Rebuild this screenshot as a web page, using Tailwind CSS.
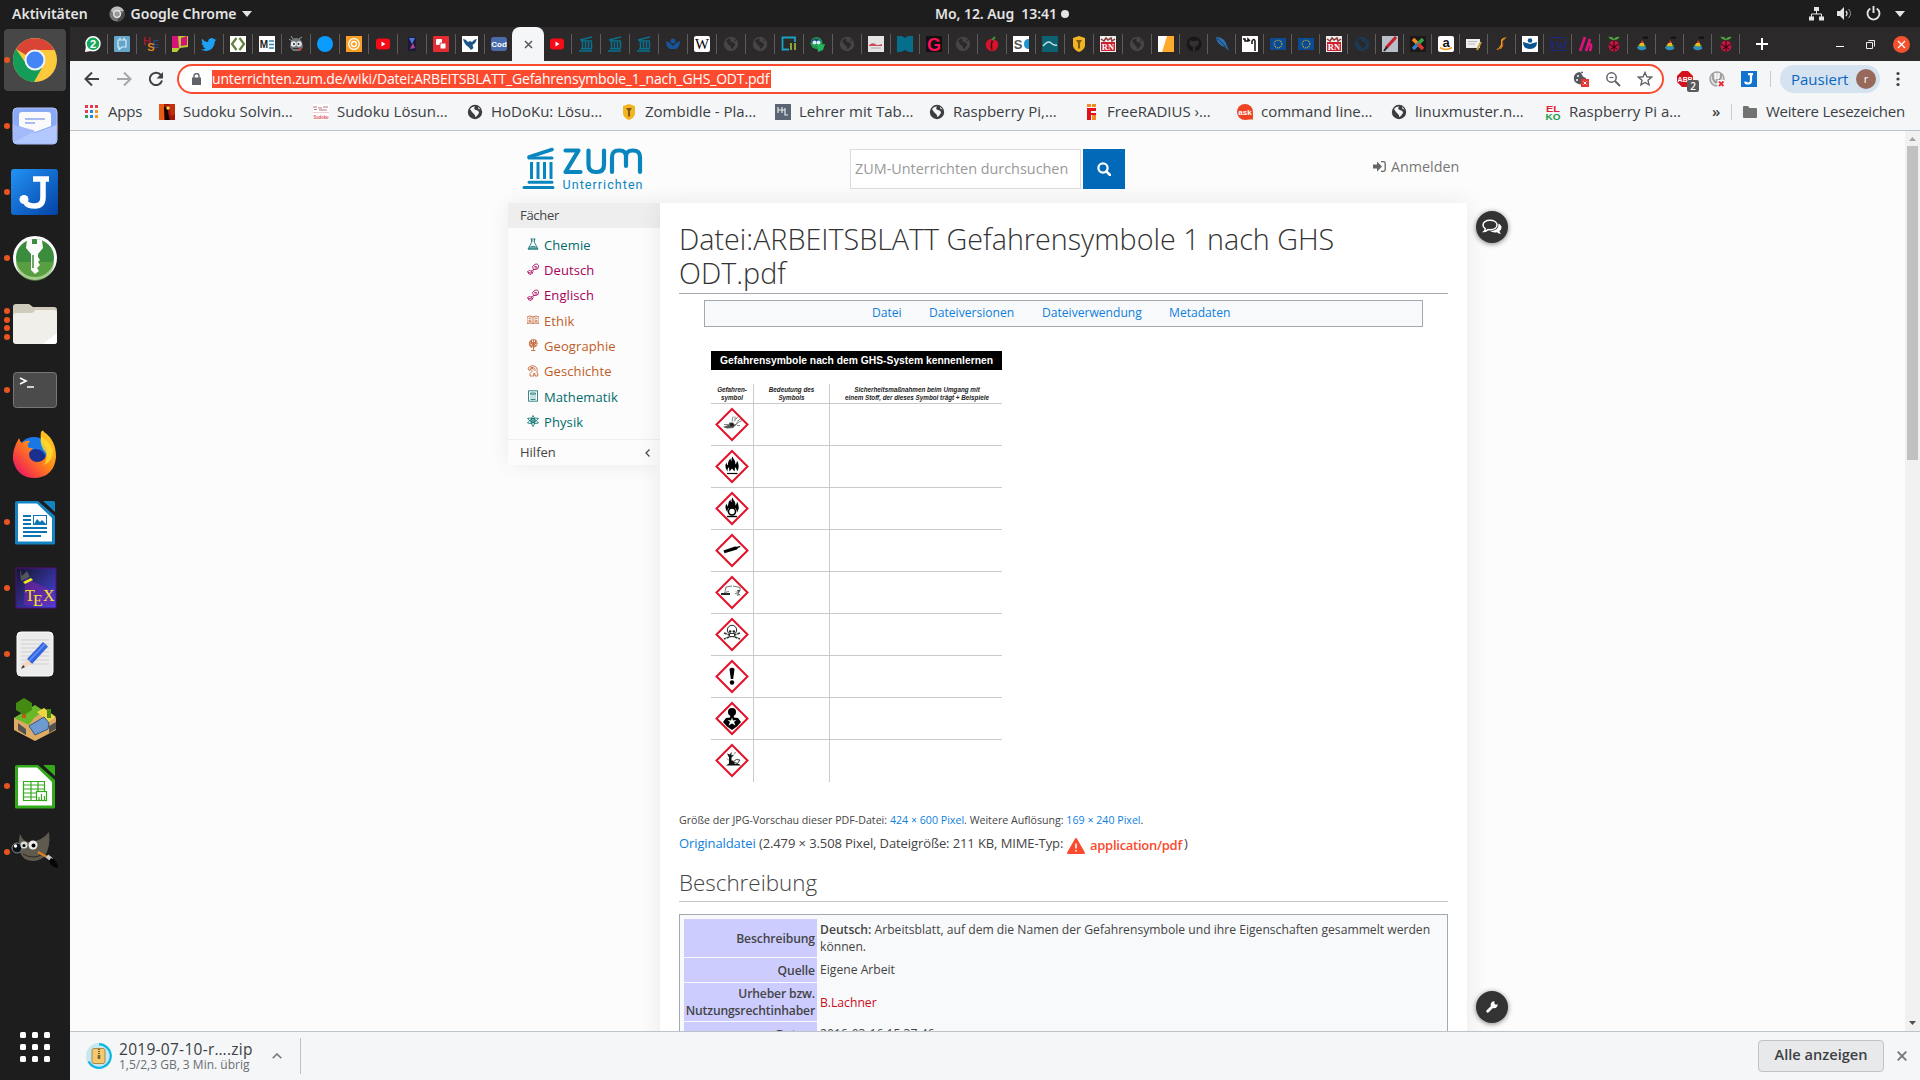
<!DOCTYPE html>
<html lang="de">
<head>
<meta charset="utf-8">
<title>Datei:ARBEITSBLATT Gefahrensymbole 1 nach GHS ODT.pdf</title>
<script src="https://cdn.jsdelivr.net/npm/@tailwindcss/browser@4"></script>
</head>
<body class="w-[1920px] h-[1080px] overflow-hidden bg-[#1d1d1d] font-['Open_Sans','Noto_Sans',sans-serif]">
<div class="flex flex-col h-full">

<!-- GNOME top bar -->
<header class="flex h-[27px] shrink-0 items-center bg-[#1d1d1d] text-[#e4e4e4] text-[14px] font-semibold font-['Noto_Sans',sans-serif]">
  <div class="flex w-[935px] items-center pl-3">
    <span>Aktivitäten</span>
    <svg class="ml-[21px] size-4" viewBox="0 0 16 16"><circle cx="8" cy="8" r="7.6" fill="#777"/><path d="M8 .4A7.6 7.6 0 0 1 15 5H8A3.4 3.4 0 0 0 4.6 8L2 4A7.600 7.600 0 0 1 8 .4z" fill="#bdbdbd"/><path d="M15 5a7.600 7.600 0 0 1-7 10.600l3.400-6.600z" fill="#4a4a4a"/><circle cx="8" cy="8" r="3.400" fill="#999" stroke="#eee" stroke-width="1.200"/></svg>
    <span class="ml-[6px]">Google Chrome</span>
    <svg class="ml-[5px] w-[10px] h-[6px]" viewBox="0 0 10 6"><path d="M0 0h10L5 6z" fill="#e4e4e4"/></svg>
  </div>
  <span class="whitespace-pre tracking-[-0.06px]">Mo, 12. Aug  13:41</span>
  <span class="ml-[4px] size-[8px] rounded-full bg-[#e4e4e4]"></span>
  <div class="ml-auto flex items-center pr-[15px]">
    <svg class="w-[15px] h-[14px]" viewBox="0 0 15 14"><path d="M5 0h5v4H5zM0 9.500h5v4H0zM10 9.500h5v4h-5z" fill="#e4e4e4"/><path d="M7.500 4v3M2.500 10V7h10v3" fill="none" stroke="#e4e4e4"/></svg>
    <svg class="ml-[13px] w-[15px] h-[13px]" viewBox="0 0 15 13"><path d="M0 4h3l4-4v13L3 9H0z" fill="#e4e4e4"/><path d="M9 4q2 2.500 0 5" fill="none" stroke="#e4e4e4" stroke-width="1.300"/><path d="M11.500 2q4 4.500 0 9" fill="none" stroke="#999"/></svg>
    <svg class="ml-[14px] size-[15px]" viewBox="0 0 15 15"><path d="M4.300 2.500a6 6 0 1 0 6.400 0M7.500 0v7" fill="none" stroke="#e4e4e4" stroke-width="1.900"/></svg>
    <svg class="ml-[14px] w-[10px] h-[6px]" viewBox="0 0 10 6"><path d="M0 0h10L5 6z" fill="#e4e4e4"/></svg>
  </div>
</header>

<div class="flex flex-1 min-h-0">
<!-- Dock -->
<nav class="flex w-[70px] shrink-0 flex-col bg-[#1d1d1d]">
  <div id="dock" class="flex flex-col"></div>
  <div class="mt-auto mb-[18px] ml-[20px] grid w-[30px] grid-cols-3 gap-[6px]">
    <i class="size-[6px] rounded-[1.5px] bg-white"></i><i class="size-[6px] rounded-[1.5px] bg-white"></i><i class="size-[6px] rounded-[1.5px] bg-white"></i>
    <i class="size-[6px] rounded-[1.5px] bg-white"></i><i class="size-[6px] rounded-[1.5px] bg-white"></i><i class="size-[6px] rounded-[1.5px] bg-white"></i>
    <i class="size-[6px] rounded-[1.5px] bg-white"></i><i class="size-[6px] rounded-[1.5px] bg-white"></i><i class="size-[6px] rounded-[1.5px] bg-white"></i>
  </div>
</nav>

<main class="flex min-w-0 flex-1 flex-col">
  <!-- Tab strip -->
  <div class="flex h-[34px] shrink-0 items-center bg-[#2c292b] pl-[9px]">
    <div id="tabs" class="flex h-full items-center"></div>
    <svg class="ml-[16px] size-3" viewBox="0 0 12 12"><path d="M6 0v12M0 6h12" stroke="#fff" stroke-width="2"/></svg>
    <div class="ml-auto flex items-center pr-[10px]">
      <span class="mt-[5px] h-px w-[8px] bg-white"></span>
      <svg class="ml-[22px] size-[9px]" viewBox="0 0 9 9"><path d="M.5 2.500h6v6h-6zM2.500.5h6v6" fill="none" stroke="#eee"/></svg>
      <svg class="ml-[18px] size-[17px]" viewBox="0 0 17 17"><circle cx="8.500" cy="8.500" r="8.500" fill="#f4512f"/><path d="M5 5l7 7M12 5l-7 7" stroke="#fff" stroke-width="1.300"/></svg>
    </div>
  </div>

  <!-- Navigation bar -->
  <div class="flex h-[36px] shrink-0 items-center bg-[#f4f6f8] text-[15px] text-[#3c4043]">
    <svg class="ml-[14px] size-4" viewBox="0 0 16 16"><path d="M15 8H2M8 1.500L1.500 8L8 14.500" fill="none" stroke="#3f4245" stroke-width="2"/></svg>
    <svg class="ml-[16px] size-4" viewBox="0 0 16 16"><path d="M1 8h13M8 1.500L14.500 8L8 14.500" fill="none" stroke="#a5a8ab" stroke-width="2"/></svg>
    <svg class="ml-[16px] size-4" viewBox="0 0 16 16"><path d="M13 4.200A6.200 6.200 0 1 0 14 9.500" fill="none" stroke="#3f4245" stroke-width="2"/><path d="M15 1v6.500H8.500z" fill="#3f4245"/></svg>
    <div class="ml-[13px] flex h-[30px] w-[1487px] items-center rounded-full border-2 border-[#fb4a2e] bg-white">
      <svg class="ml-[13px] w-[9px] h-[12px]" viewBox="0 0 9 12"><path d="M0 4.500h9V12H0z" fill="#5f6368"/><path d="M2 5V3a2.500 2.500 0 0 1 5 0v2" fill="none" stroke="#5f6368" stroke-width="1.400"/></svg>
      <span class="ml-[11px] flex h-[18px] w-[559px] items-center whitespace-nowrap bg-[#fb4a2e] text-[14px] leading-[18px] tracking-[-0.17px] text-white">unterrichten.zum.de/wiki/Datei:ARBEITSBLATT_Gefahrensymbole_1_nach_GHS_ODT.pdf</span>
      <div class="ml-auto flex items-center gap-[16px] pr-[9px]">
        <svg class="size-4" viewBox="0 0 16 16"><path d="M7 1a6.200 6.200 0 1 0 6.200 6.200L10 5.500 8.500 3z" fill="#55595d"/><circle cx="5" cy="5" r="1" fill="#fff"/><circle cx="4" cy="9" r="1" fill="#fff"/><circle cx="9" cy="1.500" r="1" fill="#55595d"/><rect x="8" y="8" width="8" height="8" fill="#e53935"/><path d="M10.500 10.500l3 3m0-3l-3 3" stroke="#fff"/></svg>
        <svg class="size-4" viewBox="0 0 16 16"><circle cx="6.500" cy="6.500" r="4.700" fill="none" stroke="#5f6368" stroke-width="1.500"/><path d="M10 10l5 5" stroke="#5f6368" stroke-width="2"/><path d="M4.500 6.500h4" stroke="#5f6368"/></svg>
        <svg class="size-4" viewBox="0 0 16 16"><path d="M8 1.500l1.900 4.300 4.700.4-3.600 3.100 1.100 4.600L8 11.500l-4.100 2.400L5 9.300 1.400 6.200l4.700-.4z" fill="none" stroke="#5f6368" stroke-width="1.400"/></svg>
      </div>
    </div>
    <div class="relative ml-[13px] size-4">
      <svg class="size-4" viewBox="0 0 16 16"><path d="M5 0h6l5 5v6l-5 5H5l-5-5V5z" fill="#d4121c"/><text x="8" y="10.500" font-size="7" font-weight="700" text-anchor="middle" fill="#fff" font-family="Liberation Sans">ABP</text></svg>
      <span class="absolute left-[10px] top-[9px] flex h-[12px] w-[12px] items-center justify-center rounded-[2px] bg-[#5b5b5b] text-[10px] font-semibold text-white">2</span>
    </div>
    <svg class="ml-[16px] size-4" viewBox="0 0 16 16"><circle cx="8" cy="8" r="7" fill="#ddd" stroke="#a2a2a2" stroke-width="1.500"/><path d="M4 3v5l3 4M12 3v4l-3 3M8 8v4" fill="none" stroke="#909090" stroke-width="1.500"/><path d="M6 2l1 6M10 2L9 8" stroke="#fff" stroke-width="1.200"/><rect x="8.500" y="9" width="7" height="7" fill="#fff"/><path d="M10 10.500l4.500 4.500m0-4.500L10 15" stroke="#e2343c" stroke-width="2"/></svg>
    <svg class="ml-[16px] size-4" viewBox="0 0 16 16"><rect width="16" height="16" fill="#1173cf"/><path d="M7 3.200h5M10 3v6.500q0 3-2.800 3t-3-1.900" fill="none" stroke="#fff" stroke-width="2.200"/></svg>
    <span class="ml-[13px] h-4 w-px bg-[#c9ccd0]"></span>
    <div class="ml-[9px] flex h-[28px] w-[100px] items-center rounded-full bg-[#d5e3f0] pl-[11px] text-[#0b66c0]"><span class="w-[57px]">Pausiert</span><span class="ml-[8px] flex size-5 items-center justify-center rounded-full bg-[#96695c] text-[11px] text-white">r</span></div>
    <svg class="ml-[16px] w-1 h-4" viewBox="0 0 4 16"><g fill="#3f4245"><circle cx="2" cy="2.500" r="1.600"/><circle cx="2" cy="8" r="1.600"/><circle cx="2" cy="13.500" r="1.600"/></g></svg>
  </div>

  <!-- Bookmarks bar -->
  <div class="flex h-[34px] shrink-0 items-center border-b border-[#bcc4cb] bg-[#f4f6f8] pb-[4px] text-[15px] text-[#3c4043] whitespace-nowrap">
    <svg class="ml-[15px] size-[13px]" viewBox="0 0 13 13"><path d="M0 0h3v3H0zM5 0h3v3H5zM10 0h3v3h-3zM0 5h3v3H0z" fill="#e8384f"/><path d="M5 5h3v3H5zM5 10h3v3H5z" fill="#1e88e5"/><path d="M10 5h3v3h-3zM10 10h3v3h-3z" fill="#f29a1f"/><path d="M0 10h3v3H0z" fill="#2e9e5b"/></svg>
    <span class="ml-[10px] w-[51px] tracking-[-0.2px]">Apps</span>
    <div id="bookmarks" class="flex"></div>
    <span class="ml-[13px] w-[19px] font-semibold">»</span>
    <span class="h-4 w-px bg-[#c9ccd0]"></span>
    <svg class="ml-[11px] w-[14px] h-[12px]" viewBox="0 0 14 12"><path d="M0 1q0-1 1-1h4l1.500 2H13q1 0 1 1v8q0 1-1 1H1q-1 0-1-1z" fill="#727272"/></svg>
    <span class="ml-[9px] tracking-[-0.23px]">Weitere Lesezeichen</span>
  </div>

  <!-- Page -->
  <div class="relative flex min-h-0 flex-1 overflow-hidden bg-[#fcfcfc]">
    <div class="flex min-w-0 flex-1 flex-col pl-[438px] text-[#444]">
      <div class="flex h-[72px] shrink-0 items-start">
        <svg class="ml-[14px] mt-[16px] w-[122px] h-[44px]" viewBox="0 0 122 44"><g fill="none" stroke="#0a86bf" stroke-linecap="round" stroke-linejoin="round"><path d="M2 40.500h29M7 35.200h23M7 11h23" stroke-width="3"/><path d="M7 10L30 2.500" stroke-width="3.600"/><path d="M9.500 15v17M16 15v17M22.500 15v17M29 15v17" stroke-width="3" stroke-linecap="butt"/><path d="M43.500 3.500H56.500L43.500 25H58.500" stroke-width="4.200"/><path d="M66.500 3.500V17.500q0 7.500 7 7.500h1.500q7 0 7-7.500V3.500" stroke-width="4.200"/><path d="M90 25V10q0-6.500 6.500-6.500h1.500q6 0 6 6.500v9M104 10q0-6.500 6.500-6.500h.5q7 0 7 6.500v15" stroke-width="4.200"/></g><text x="40.500" y="42" font-family="Roboto" font-size="12.500" fill="#0a86bf" textLength="80">Unterrichten</text></svg>
        <div class="ml-[206px] mt-[18px] flex h-10 w-[231px] items-center border border-[#ddd] bg-white pl-[4px] text-[14.4px] text-[#999]"><span class="whitespace-nowrap">ZUM-Unterrichten durchsuchen</span></div>
        <div class="ml-[2px] mt-[18px] flex h-10 w-[42px] items-center justify-center bg-[#0069b8]"><svg class="size-[14px]" viewBox="0 0 14 14"><circle cx="6" cy="6" r="4.600" fill="none" stroke="#fff" stroke-width="2.300"/><path d="M9.300 9.300L13 13" stroke="#fff" stroke-width="2.600" stroke-linecap="round"/></svg></div>
        <div class="ml-[248px] mt-[25px] flex items-center text-[14.3px] text-[#777]"><svg class="w-[13px] h-[11px]" viewBox="0 0 13 11"><path d="M0 3.500h4V.500l5 5-5 5v-3H0z" fill="#666"/><path d="M8 .7h2.500q1.700 0 1.700 1.700v6.200q0 1.700-1.700 1.700H8" fill="none" stroke="#666" stroke-width="1.300"/></svg><span class="ml-[5px]">Anmelden</span></div>
      </div>
      <div class="flex flex-1">
        <aside class="h-[262px] w-[152px] shrink-0 bg-[#fcfcfc] text-[13px] shadow-[0_0_20px_rgba(0,0,0,.07)]">
          <div class="h-[25px] bg-[#eee] pl-3 leading-[25px]"><span class="tracking-[-0.3px]">Fächer</span></div>
          <ul id="subjects" class="pt-[5px] pb-[4px]"></ul>
          <div class="flex items-center border-t border-[#eee] pl-3 pr-[10px] leading-[25px]"><span>Hilfen</span><svg class="ml-auto w-[5px] h-[8px]" viewBox="0 0 5 8"><path d="M4.500.5L1 4l3.500 3.500" fill="none" stroke="#444" stroke-width="1.200"/></svg></div>
        </aside>
        <article class="z-10 h-[900px] w-[807px] shrink-0 bg-white px-[19px] pt-[19px] shadow-[0_0_24px_rgba(0,0,0,.08)]">
          <h1 class="h-[72px] whitespace-nowrap border-b border-[#a2a9b1] text-[28.7px] font-light leading-[34px] text-[#333]">Datei:ARBEITSBLATT Gefahrensymbole 1 nach GHS<br>ODT.pdf</h1>
          <div class="ml-[25px] mt-[6px] flex h-[27px] w-[719px] items-center border border-[#a2a9b1] bg-[#f8f9fa] pl-[167px] text-[12.1px] text-[#0e7fdd]"><span class="w-[57px]">Datei</span><span class="w-[113px]">Dateiversionen</span><span class="w-[127px]">Dateiverwendung</span><span>Metadaten</span></div>
          <!-- PDF preview -->
          <div class="ml-[32px] mt-[24px] h-[430px] w-[291px] font-['Liberation_Sans',sans-serif] text-black">
            <div class="flex h-[19px] items-center justify-center bg-black text-[10.3px] font-bold text-white"><span class="whitespace-nowrap">Gefahrensymbole nach dem GHS-System kennenlernen</span></div>
            <div class="mt-[14px] flex h-[20px] items-center border-b border-[#c9cbca] text-center text-[6.3px] font-bold italic leading-[8.3px] text-[#222]">
              <div class="h-full w-[43px] border-r border-[#c9cbca] pt-[2px]">Gefahren-<br>symbol</div>
              <div class="h-full w-[76px] border-r border-[#c9cbca] pt-[2px]">Bedeutung des<br>Symbols</div>
              <div class="h-full w-[172px] whitespace-nowrap pl-[2px] pt-[2px]">Sicherheitsmaßnahmen beim Umgang mit<br>einem Stoff, der dieses Symbol trägt + Beispiele</div>
            </div>
            <div id="ghs"></div>
          </div>
          <p class="mt-[31px] text-[10.65px] leading-[17px]">Größe der JPG-Vorschau dieser PDF-Datei: <span class="text-[#0e7fdd]">424 × 600 Pixel</span>. Weitere Auflösung: <span class="text-[#0e7fdd]">169 × 240 Pixel</span>.</p>
          <p class="mt-[4px] flex h-[22px] items-center whitespace-nowrap text-[13px]"><span class="w-[384px] tracking-[-0.1px]"><span class="text-[#0e7fdd]">Originaldatei</span> (2.479 × 3.508 Pixel, Dateigröße: 211 KB, MIME-Typ:</span>
            <svg class="ml-[4px] mt-[4px] w-[18px] h-[16px]" viewBox="0 0 18 16"><path d="M9 1L17 15H1z" fill="#fb4a2e" stroke="#fb4a2e" stroke-width="2" stroke-linejoin="round"/><path d="M9 5.500v5M9 12v1.600" stroke="#fff" stroke-width="1.600"/></svg>
            <span class="ml-[5px] mt-[3px] w-[92px] font-semibold tracking-[-0.27px] text-[#fb4a2e]">application/pdf</span><span class="ml-[2px]">)</span></p>
          <h2 class="mt-[15px] h-[32px] border-b border-[#c8c8c8] text-[22.4px] font-light leading-[26px]">Beschreibung</h2>
          <div class="mt-[12px] grid h-[200px] grid-cols-[133px_1fr] content-start gap-x-[3px] gap-y-px whitespace-nowrap border border-[#a2a9b1] bg-[#f8f9fa] p-[4px] text-[12.15px] leading-[17px]">
            <div class="flex h-[38px] items-center justify-end bg-[#ccccff] pr-[2px] font-semibold tracking-[-0.1px]">Beschreibung</div>
            <div class="pt-[2px]"><span class="font-semibold">Deutsch:</span> Arbeitsblatt, auf dem die Namen der Gefahrensymbole und ihre Eigenschaften gesammelt werden<br>können.</div>
            <div class="flex h-[24px] items-center justify-end bg-[#ccccff] pr-[2px] font-semibold tracking-[-0.1px]">Quelle</div>
            <div class="flex items-center pb-[2px]">Eigene Arbeit</div>
            <div class="h-[38px] bg-[#ccccff] pr-[2px] pt-[2px] text-right font-semibold tracking-[-0.15px]">Urheber bzw.<br>Nutzungsrechtinhaber</div>
            <div class="flex items-center text-[#cc0c1c]">B.Lachner</div>
            <div class="flex h-[24px] items-center justify-end bg-[#ccccff] pr-[2px] font-semibold tracking-[-0.2px]">Datum</div>
            <div class="flex items-center pb-[2px]">2016-03-16 15:37:46</div>
          </div>
        </article>
      </div>
    </div>
    <div class="absolute left-[1406px] top-[80px] z-20 flex size-8 items-center justify-center rounded-full bg-[#333] shadow-[0_1px_5px_rgba(0,0,0,.5)]"><svg class="w-[20px] h-[16px]" viewBox="0 0 20 16"><path d="M8 1.200c4 0 7 2 7 4.800s-3 4.800-7 4.800q-1 0-2-.2Q4 12.500 2 12.500q1.200-1 1.200-2.800Q1 8.300 1 6c0-2.800 3-4.800 7-4.800z" fill="none" stroke="#fff" stroke-width="1.500"/><path d="M16.500 4.500Q20 6.500 19.500 9q-.3 2-2 3 .1 1.700 1.500 3-2.500 0-4-1.800-4 .8-7-1.200 9 0 8.500-7.500z" fill="#fff"/></svg></div>
    <div class="absolute left-[1406px] top-[860px] z-20 flex size-8 items-center justify-center rounded-full bg-[#333] shadow-[0_1px_5px_rgba(0,0,0,.5)]"><svg class="size-[12px]" viewBox="0 0 12 12"><path d="M1.700 10.300L7 5" stroke="#fff" stroke-width="2.800" stroke-linecap="round"/><path d="M11.600 3.200a3.500 3.500 0 1 1-3-3L8.300 2.300l1.300 1.500z" fill="#fff"/></svg></div>
    <div class="flex w-[15px] shrink-0 flex-col items-center bg-[#f1f1f1]">
      <svg class="mt-[6px] w-[7px] h-[4px]" viewBox="0 0 7 4"><path d="M3.500 0L7 4H0z" fill="#a3a3a3"/></svg>
      <span class="mt-[5px] h-[314px] w-[11px] bg-[#c1c1c1]"></span>
      <svg class="mt-auto mb-[6px] w-[7px] h-[4px]" viewBox="0 0 7 4"><path d="M0 0h7L3.500 4z" fill="#505050"/></svg>
    </div>
  </div>

  <!-- Download shelf -->
  <footer class="flex h-[49px] shrink-0 items-center border-t border-[#bcc4c9] bg-[#f4f6f8]">
    <svg class="ml-[16px] size-[26px]" viewBox="0 0 26 26"><circle cx="13" cy="13" r="13" fill="#c5e7f0"/><path d="M13 1.200A11.800 11.800 0 1 1 2.500 18.500" fill="none" stroke="#0bb5e4" stroke-width="2.200"/><rect x="6" y="5.500" width="13" height="15" rx="2" fill="#f3ca70" stroke="#a8894a"/><path d="M13 6v6" stroke="#6c5426" stroke-width="2" stroke-dasharray="1 1"/><rect x="11.700" y="12" width="2.600" height="4" fill="#7b6331"/></svg>
    <div class="ml-[7px] flex w-[146px] flex-col whitespace-nowrap text-[#3c4043]"><span class="text-[15.5px] leading-[17px] tracking-[0.28px]">2019-07-10-r….zip</span><span class="text-[12px] leading-[14px] text-[#6b6e71]">1,5/2,3 GB, 3 Min. übrig</span></div>
    <svg class="ml-[7px] w-[10px] h-[6px]" viewBox="0 0 10 6"><path d="M.7 5.300L5 1l4.300 4.300" fill="none" stroke="#777" stroke-width="1.600"/></svg>
    <span class="ml-[18px] h-[36px] w-px bg-[#bcc4c9]"></span>
    <div class="ml-auto mr-[13px] flex h-8 w-[126px] items-center justify-center rounded-[4px] border border-[#bcc4c9] bg-[#e8e9eb] text-[14.6px] font-semibold text-[#3c4043] pb-[2px]">Alle anzeigen</div>
    <svg class="mr-[13px] size-[10px]" viewBox="0 0 10 10"><path d="M.7.7l8.600 8.600M9.300.7L.7 9.300" stroke="#777" stroke-width="1.900"/></svg>
  </footer>
</main>
</div>
</div>

<script>
const svg16 = (c) => `<svg class="size-4 shrink-0" viewBox="0 0 16 16">${c}</svg>`;
const t = (s, x, y, size, fill, extra = '') => `<text x="${x}" y="${y}" font-size="${size}" fill="${fill}" text-anchor="middle" font-family="Liberation Sans" font-weight="700" ${extra}>${s}</text>`;
const globe = (a, b) => `<circle cx="8" cy="8" r="7.200" fill="${a}"/><path d="M3 5q2-3 5-2.500Q6 5 9 6q3 .5 3 3-1.500 3-4 4 .5-2-1-3Q5 8.500 3 5zM11 2.500l2.500 3-2-.5z" fill="${b}"/>`;
const f = {
  wa: `<path d="M0 16l1-6 5 5z" fill="#fff"/><circle cx="8" cy="7.800" r="7" fill="#17a85a" stroke="#fff" stroke-width="1.500"/>` + t('2', 8, 12, 11, '#fff'),
  note: `<rect width="16" height="16" rx="1" fill="#64a5c9"/><path d="M4 4h8v7H8l-3 2.500V11H4zM6 1.500v3M10 1.500v3" fill="none" stroke="#d8ecf5" stroke-width="1.200"/>`,
  hse: t('H', 4, 9, 11, '#9c1b2f') + t('E', 13, 12, 10, '#27456e') + t('S', 8, 15, 11, '#d9831c'),
  pink: `<rect width="16" height="16" fill="#b5cc33"/><path d="M0 0h6l1 12H0z" fill="#d6117c"/><path d="M9 2l6-2v9l-6 1z" fill="#d6117c"/><path d="M8 12l8-1v5H5z" fill="#2b2a2b"/>`,
  tw: `<path d="M15.500 3.500q-1 .6-2 .6 1-.6 1.300-1.700-1 .5-2 .7a3.200 3.200 0 0 0-5.500 2.900Q3.500 6 1.300 2.800-.2 5.500 2 7.200q-.7 0-1.400-.4 0 2.500 2.500 3.100-.7.200-1.400.1.600 2 3 2.200Q2.700 13.700 0 13.500c6 3.500 13.500.5 13.800-8.200q1-.8 1.700-1.800z" fill="#1da1f2"/>`,
  code: `<rect width="16" height="16" fill="#fff"/><path d="M6.500 2L2 8l4.500 6M9.500 2L14 8l-4.500 6" fill="none" stroke="#61803a" stroke-width="2.200"/>`,
  me: `<rect width="16" height="16" fill="#fff"/>` + t('M', 5, 12, 10, '#222') + `<path d="M10 5h5M10 8.500h5M10 12h5" stroke="#2a87ab" stroke-width="1.600"/>`,
  robot: `<path d="M3 6q1-4 5-4t6 4l1 5-3 4H5l-3-4z" fill="#70777b"/><path d="M1 3l3 2M3 0l2 3M14 1l-3 2" stroke="#9aa2a6"/><circle cx="5.500" cy="8" r="2.700" fill="#e4e8ea"/><circle cx="11" cy="8" r="2.700" fill="#e4e8ea"/><circle cx="6" cy="8" r="1" fill="#222"/><circle cx="10.500" cy="8" r="1" fill="#222"/><path d="M5 12.500h6" stroke="#333"/><circle cx="12" cy="13" r="1.500" fill="#c8443c"/>`,
  blue: `<circle cx="8" cy="8" r="8" fill="#0a9bff"/>`,
  orange: `<rect width="16" height="16" fill="#f99f26"/><circle cx="8" cy="8" r="5.300" fill="none" stroke="#fff" stroke-width="1.300"/><circle cx="8" cy="8" r="2.500" fill="none" stroke="#fff" stroke-width="1.300"/>`,
  yt: `<rect x="1" y="2.500" width="14" height="11" rx="3" fill="#f60b16"/><path d="M6.500 5.500v5L10.500 8z" fill="#fff"/>`,
  phone: `<rect x="4" y="1" width="8" height="14" fill="#1b1a3a"/><path d="M5 2h6l-3 6z" fill="#4c78e0"/><path d="M6 13l3-6 2 5z" fill="#b34390"/>`,
  card: `<rect width="16" height="16" rx="1" fill="#e32d33"/><rect x="3" y="3" width="6" height="6" rx="1" fill="#fff"/><rect x="7" y="7" width="6" height="6" rx="1" fill="#fff" stroke="#e32d33"/>`,
  bird: `<rect width="16" height="16" fill="#fff"/><path d="M1 3q3 0 5 3l2-1 2 1q2-3 5-3-1 4-4.500 6l1 3-2.500 2-2.500-3Q2 8 1 3z" fill="#1b5687"/>`,
  cod: `<rect y="1" width="16" height="14" rx="3" fill="#4a6cad"/>` + t('Cod', 8, 11, 8, '#fff'),
  zum: `<g fill="none" stroke="#08718f" stroke-width="1.500"><path d="M2 4l12-3M3 5h11M1 15h13M3 12.700h11M4.500 6v6M7.500 6v6M10.500 6v6M13.500 6v6" /></g>`,
  wing: `<circle cx="8" cy="5" r="2.500" fill="#17559a"/><path d="M1 5q4 1 7 5 3-4 7-5 0 6-4 8H5Q1 11 1 5z" fill="#17559a"/>`,
  wiki: `<rect width="16" height="16" rx="2" fill="#fff"/><text x="8" y="13" font-size="14" text-anchor="middle" font-family="Liberation Serif" textLength="14" lengthAdjust="spacingAndGlyphs">W</text>`,
  gg: globe('#474546', '#2a2829'),
  li: `<path d="M8 13.500H1.500V1.500H14V6" fill="none" stroke="#17a2c2" stroke-width="1.800"/><path d="M10 7v7M14 7v7" stroke="#8ba53b" stroke-width="2"/>`,
  owl: `<circle cx="6.500" cy="7" r="6" fill="#1f9a4c"/><path d="M7 9l8-1-2 6-5 2z" fill="#23b45c"/><path d="M2 4q4-3 8 0l1 3H1z" fill="#1d477e"/><circle cx="4.500" cy="6.500" r="2" fill="#cfeff5"/><circle cx="8.500" cy="6.500" r="2" fill="#cfeff5"/>`,
  paper: `<rect width="16" height="16" fill="#e4e4e4"/><path d="M1 9q4-3 6-1t7 0v2H1z" fill="#c94b54"/><path d="M3 12h10" stroke="#aaa"/>`,
  teal: `<path d="M0 0h5l3 2 3-2h5v16h-4l-4-2-4 2H0z" fill="#046e8c"/>`,
  g: `<rect width="16" height="16" fill="#111"/>` + t('G', 8, 14.500, 18, '#ff0f57'),
  pep: `<circle cx="8" cy="9" r="6.200" fill="#d8122d"/><path d="M10 2q-4 5-2 12" stroke="#38101a" stroke-width="1.600" fill="none"/><path d="M8 4l3-3" stroke="#3a9a38" stroke-width="2"/>`,
  sc: `<rect width="16" height="16" fill="#fff"/>` + t('S', 5, 13, 13, '#555') + `<path d="M16 3v10q-5 0-5-5t5-5z" fill="#1c95cf"/>`,
  wave: `<rect width="16" height="16" fill="#0c6173"/><path d="M1 10q5-6 8-3t6 2" fill="none" stroke="#bfe0e0" stroke-width="1.400"/>`,
  shield: `<path d="M2 2l6-2 6 2v8q-1 4-6 6-5-2-6-6z" fill="#f2b521"/><path d="M5 4h6l-2 3v5l-1 1-1-1V7z" fill="#7d5a13"/>`,
  rn: `<rect width="16" height="16" fill="#eee"/><path d="M1 3l3 2 2-3 2 2 3-2 1 3 3-2" fill="none" stroke="#8a3a3a" stroke-width="1.500"/><rect x="1" y="6" width="14" height="9" fill="#cc2030"/><text x="8" y="13.500" font-size="8.500" text-anchor="middle" font-weight="700" fill="#fff" font-family="Liberation Serif">RN</text>`,
  slant: `<rect width="16" height="16" fill="#fff"/><path d="M9 0h7v16H4z" fill="#ffa92d"/>`,
  gh: `<circle cx="8" cy="8" r="7.500" fill="#191717"/><path d="M4 4l2 1h4l2-1q1.500 3 0 5-1 1.500-3 1.500V15H7v-4.500Q5 10.500 4 9q-1.500-2 0-5z" fill="#343132"/>`,
  feather: `<path d="M2 1q9 0 11 9l2 5-4-4Q3 9 2 1z" fill="#2a6fb0"/><path d="M3 2l9 9" stroke="#173a5e"/>`,
  sketch: `<rect width="16" height="16" fill="#fff"/><path d="M1 3h2v2h3V3l2 2M10 5q2-3 3 0v10M10 5v3" fill="none" stroke="#111" stroke-width="1.500"/>`,
  eu: `<rect y="2" width="16" height="12" fill="#0b4b96"/><circle cx="8" cy="8" r="3.800" fill="none" stroke="#c6b82f" stroke-width="1.200" stroke-dasharray="1 1"/>`,
  gb: globe('#1d3a55', '#2a2829'),
  pen: `<rect width="16" height="16" fill="#b9bfc9"/><path d="M14 1L4 12" stroke="#c6202a" stroke-width="3"/><path d="M5 11l-3 4" stroke="#222" stroke-width="2"/>`,
  xx: `<rect width="16" height="16" fill="#1c1817"/><path d="M3 3l5 5" stroke="#f08c1e" stroke-width="3.500"/><path d="M13 3L8 8" stroke="#35a348" stroke-width="3.500"/><path d="M3 13l5-5" stroke="#2f7fce" stroke-width="3.500"/><path d="M13 13L8 8" stroke="#dd3a30" stroke-width="3.500"/>`,
  amz: `<rect width="16" height="16" rx="2" fill="#fff"/>` + t('a', 8, 10.500, 13, '#111') + `<path d="M2 11.500q6 4 12 0" fill="none" stroke="#f79a1c" stroke-width="1.600"/>`,
  memo: `<path d="M0 3h14v9H0z" fill="#eee"/><path d="M2 5.500h9M2 8h7" stroke="#bbb"/><path d="M15 6l-4 8" stroke="#c99b4b" stroke-width="2"/>`,
  es: `<path d="M13 1q-7 1-6 5t-5 8q8-1 6.500-5T13 1z" fill="#f6a21c"/><path d="M11 3Q7 4 9 8q0 4-6 5" fill="none" stroke="#b35a13"/>`,
  bowl: `<rect width="16" height="16" fill="#fff"/><path d="M1 6l7 2 7-2q0 7-7 7T1 6z" fill="#0a5490"/><circle cx="8" cy="4.500" r="2.300" fill="#0a5490"/>`,
  tw2: `<rect x=".5" y="1.500" width="15" height="13" rx="1" fill="none" stroke="#172a8c"/><text x="8" y="12.500" font-size="10" text-anchor="middle" fill="#172a8c" font-family="Liberation Serif">TW</text>`,
  hh: `<path d="M7 1L2 15M12 3L8 15M10 9q4-2 3 2l-1 4" fill="none" stroke="#e0127e" stroke-width="2.600"/>`,
  pi: `<path d="M8 4Q4 4 2.500 1 6 0 8 3q2-3 5.500-2Q12 4 8 4z" fill="#4ba63d"/><circle cx="8" cy="10" r="5.500" fill="#c0173d"/><path d="M3 8l5 3 5-3M8 5v10M5 13l3-2 3 2" stroke="#250510" fill="none"/>`,
  stair: `<path d="M3 12q0-2 3-2h4q3 1 2 3-6 3-9-1z" fill="#2f8ec0"/><path d="M4 10q1-2 3-2h3l2 2-3 1z" fill="#5bb046"/><path d="M6 7h4v3H5z" fill="#e6b91f"/><path d="M8 4l2 3H7z" fill="#e03a2c"/><path d="M9 2q3-1 5 0" stroke="#111" fill="none" stroke-width="2"/>`,
  dark: globe('#3b3d3e', '#f4f6f8'),
  sud: `<rect width="16" height="16" fill="#a3150b"/><path d="M0 0h5v16H0z" fill="#e85b14"/><path d="M10 0h6v10l-4 2z" fill="#c0300e"/><path d="M5 3h4v6l2 7H6z" fill="#120302"/><circle cx="9" cy="4" r="1.800" fill="#ffd34e"/>`,
  sud2: `<rect width="16" height="16" fill="#fff"/>` + t('Sudoku', 8, 15, 6, '#e2505a', 'textLength="15" lengthAdjust="spacingAndGlyphs"') + `<path d="M0 3h4M5 4h4M10 3h5M1 5.500h3M6 6h8" stroke="#b8777c" stroke-width="1.200"/><path d="M0 8.500h16" stroke="#e9d0d2"/>`,
  ht: `<rect width="16" height="16" fill="#5b6473"/><path d="M3 3v6M7 3v6M3 6h7M10 4v7h3" fill="none" stroke="#e6e8ea" stroke-width="1.200"/>`,
  fr: `<path d="M4 0h4v3H4zM9 0h4v3H9z" fill="#f08a24"/><path d="M9 9h4v7H9z" fill="#f08a24"/><path d="M4 4h9v3H8v2h5v2H8v5H4z" fill="#e2101b"/>`,
  ask: `<circle cx="8" cy="8" r="8" fill="#ee4423"/><path d="M9 15.500h7V9z" fill="#ee4423"/>` + t('ask', 8, 11, 8, '#fff'),
  elko: t('EL', 8, 7.500, 9.500, '#e01f3d', 'textLength="14" lengthAdjust="spacingAndGlyphs"') + t('KO', 8, 15.500, 9.500, '#1c9c45', 'textLength="15" lengthAdjust="spacingAndGlyphs"'),
};
const order = 'wa note hse pink tw code me robot blue orange yt phone card bird cod ACTIVE yt zum zum zum wing wiki gg gg li owl gg paper teal g gg pep sc wave shield rn gg slant gh feather sketch eu eu rn gb pen xx amz memo es bowl tw2 hh pi stair stair stair pi'.split(' ');
document.getElementById('tabs').innerHTML = order.map((k, i) => {
  if (k === 'ACTIVE') return `<div class="relative flex h-[34px] w-[32px] shrink-0 items-center justify-center rounded-t-[8px] bg-[#f4f6f8] -ml-[2px] -mr-px"><svg class="size-[9px]" viewBox="0 0 9 9"><path d="M1 1l7 7M8 1L1 8" stroke="#55585b" stroke-width="1.500"/></svg></div>`;
  const edge = i === 14 ? 'border-transparent' : 'border-[#5d5b5c]';
  return i < 37
    ? `<div class="flex h-[20px] w-[29px] shrink-0 items-center justify-center border-r ${edge}">${svg16(f[k])}</div>`
    : `<div class="flex h-[20px] w-[28px] shrink-0 items-center justify-center border-r ${edge}">${svg16(f[k])}</div>`;
}).join('');

document.getElementById('bookmarks').innerHTML = [
  ['sud', 'Sudoku Solvin…'], ['sud2', 'Sudoku Lösun…'], ['dark', 'HoDoKu: Lösu…'], ['shield', 'Zombidle - Pla…'], ['ht', 'Lehrer mit Tab…'],
  ['dark', 'Raspberry Pi,…'], ['fr', 'FreeRADIUS ›…'], ['ask', 'command line…'], ['dark', 'linuxmuster.n…'], ['elko', 'Raspberry Pi a…'],
].map(([k, s]) => `<div class="flex w-[154px] items-center gap-2">${svg16(f[k])}<span>${s}</span></div>`).join('');

const si = {
  flask: '<path d="M3.500 1h5M4.500 1v3.500L1 11h10L7.500 4.500V1M3.500 8.500h5M2 9.800h8M4.500 3h2M1 11h10"/>',
  talk: '<path d="M.5 8.500q2-2 4.500 0 1 2-1 3-3 0-3.500-3zM4 8l3.500-1.500M6.500 6.500Q4 3 7.500 1.500T11.500 3 9 6.500zM7 3l3 1M7.500 5h3M1 9.500l4 .5M5 10l1.500-1.500"/>',
  book: '<path d="M0 3q3-2 6 0 3-2 6 0v6.500q-3-1-6 0-3-1-6 0zM6 3v6M1.500 4.500l3-.5M1.500 6.500l3-.5M1.500 8l3-.5M7.500 4l3 .5M7.500 6l3 .5M7.500 7.500l3 .5"/>',
  globe: '<path d="M6.500.5a3.800 3.800 0 1 1 0 7.600 3.800 3.800 0 0 1 0-7.600zM3 4.300h7M6.500.5v11M4 11.500h4.500M4 2l5 5M9 2L4 7M3 2q-2 5 2 7M4.500.8q-1 3.500 2 7M8.500.8q1 3.500-2 7"/>',
  helm: '<path d="M1 3q4-4 8-1 2 2 1 5l1 4H8V8.500H6.500L7 11H3V8.500L5.500 6 4 4.500 2 5.500zM3.500 2.500q3-1 5 2M2.500 4q4-2 6 2"/>',
  calc: '<path d="M1.500.8h9v10.400h-9zM3.500 3h5v1.200h-5zM3.500 6h1M5.500 6h1M7.500 6h1M3.500 8h1M5.500 8h1M7.500 8h1M3.500 9.500h5"/>',
  atom: '<path d="M.5 3.500q6-2 11 4.500-5 2-11-4.500M11.500 3.500q-6-2-11 4.500 5 2 11-4.500M6 .5q-4 5.500 0 11 4-5.500 0-11M5 5h2v2H5z"/>',
};
document.getElementById('subjects').innerHTML = [
  ['flask', 'Chemie', 'text-[#006b6b]'], ['talk', 'Deutsch', 'text-[#a6005b]'], ['talk', 'Englisch', 'text-[#a6005b]'], ['book', 'Ethik', 'text-[#c05c28]'],
  ['globe', 'Geographie', 'text-[#c05c28]'], ['helm', 'Geschichte', 'text-[#c05c28]'], ['calc', 'Mathematik', 'text-[#006b6b]'], ['atom', 'Physik', 'text-[#006b6b]'],
].map(([k, s, c]) => `<li class="flex h-[25.3px] items-center pl-[19px] ${c}"><svg class="size-3 -mt-[3px]" viewBox="0 0 12 12"><g fill="none" stroke="currentColor" stroke-width=".8">${si[k]}</g></svg><span class="ml-[5px] tracking-[0.1px]">${s}</span></li>`).join('');

const flame = '<path d="M-4.500 5Q-8 0-5.500-4-5.300-2-4-1-4.500-5-1.500-8-1.500-6-.5-5-.8-8 .5-10 1.500-7 3-5.500 3.500-3.500 3.300-2 5-3.500 5-6 8.500 0 5 5 5 2 3 .5 3 3 2.500 5L0 2-2.500 5Q-3 2.500-3 .5-5 2-4.500 5z" fill="#000"/>';
const haz = [
  '<g fill="#222"><path d="M-9 2.500l5-2 2-3 3 3 5-2-3 3-2 2-6 .5z" opacity=".75"/><path d="M0-3l1-5M2-3l4-5M4-1l6-3M-4 0l-4 0M3-5l0-3M5-3l4-3M5 1l3 0" stroke="#666" stroke-width=".8"/><circle cx="0" cy="0" r="2"/></g>',
  flame + '<path d="M-5 7H5.500" stroke="#000" stroke-width="1.200"/>',
  '<g transform="translate(0 -1)">' + flame + '</g><circle cx="0" cy="3" r="3.500" fill="#fff" stroke="#000" stroke-width="1.600"/><path d="M-5 8H5" stroke="#000" stroke-width="1.400"/>',
  '<path d="M-8.500 0L3-4l2 .3L8-4.500l.5 1L6-2.500l-1 1.500L-7.500 2.700z" fill="#000"/>',
  '<path d="M-11 1.500h9" stroke="#000" stroke-width="1.700"/><g fill="none" stroke="#777"><path d="M-7-1l1-4.500 6-1M1-6.500l7 1.500v3M-8 0l5-1M3 1l5 1M4-1l4 4M5 3l3-1" /></g><path d="M5-2.500l3.500 0-2 4z" fill="#555"/>',
  '<path d="M-8-1.500L8 4.500M8-1.500L-8 4.500" stroke="#333" stroke-width="1.600" stroke-dasharray="3 .8"/><circle cx="0" cy="-4.500" r="4.700" fill="#fff" stroke="#222" stroke-width="1"/><path d="M-2.500-1h5v3h-5z" fill="#fff" stroke="#222" stroke-width=".9"/><circle cx="-1.900" cy="-3" r="1.300" fill="#222"/><circle cx="1.900" cy="-3" r="1.300" fill="#222"/>',
  '<path d="M-2.500-7.500Q0-10 2.500-7.500L1.200 2.500h-2.400z" fill="#000"/><circle cx="0" cy="6" r="2.200" fill="#000"/>',
  '<circle cx="0" cy="-6.500" r="4" fill="#000"/><path d="M-1.800-4h3.600v3L6-.5 9 3.500 5 8 0 11.500-5 8-9 3.500-6-.5l4.200-.5z" fill="#000"/><path d="M0-1l1 3 3.500-.5-2.500 2 1.500 3.500-3.500-2-3.500 2L-2 3.500l-2.500-2L-1 2z" fill="#fff"/>',
  '<path d="M-6 5H9L6 3 3 3.500 1 0h-1.500v-3l3-3-3 1v-4l-1.500 3L-5-7l2 4v6z" fill="#111"/><path d="M1 1.500q3-4 7-2L5.500 3z" fill="#fff" stroke="#111" stroke-width=".8"/><path d="M-5-2l2 2M2-7l2-1" stroke="#444" stroke-width=".7"/>',
];
document.getElementById('ghs').innerHTML = haz.map((h, i) => {
  const line = i < 8 ? 'border-b border-[#c9cbca]' : '';
  return `<div class="flex h-[42px] ${line}"><div class="w-[43px] border-r border-[#c9cbca]"><svg class="ml-[1.4px] w-10 h-[41px]" viewBox="-20 -20.500 40 41"><path d="M0-15.500L15.500 0 0 15.500-15.500 0z" fill="#fff" stroke="#e4132b" stroke-width="2"/>${h}</svg></div><div class="w-[76px] border-r border-[#c9cbca]"></div></div>`;
}).join('');

const page = (c) => `<path d="M-17-21h20l17 15v27q0 1.500-1.500 1.500h-37q-1.500 0-1.500-1.500v-40.500q0-1.500 3-1.500z" fill="${c}"/><path d="M-17-18.500H2L17-4v23.500h-34z" fill="#fff"/><path d="M8-21h10.500q1.500 0 1.500 1.500V-10z" fill="${c}"/>`;
const dock = [
  [1, '<circle r="22" fill="#fcc93c"/><path d="M-19-11A22 22 0 0 1 19.500-10H0a10 10 0 0 0-9 5z" fill="#da4437"/><path d="M-19-11A22 22 0 0 0-1 22L8 6Q0 12-8 5z" fill="#139d59"/><circle r="9.500" fill="#4385f5" stroke="#f3f3f3" stroke-width="2"/>'],
  [1, '<path d="M-22.500-2h45v8h-45z" fill="#d5202d"/><rect x="-22" y="-18" width="44" height="36" rx="4" fill="#8aa9f7" stroke="#b0c5fb"/><path d="M-16-11q0-3 3-3h26q3 0 3 3V0L0 6-16 0z" fill="#fafafa"/><path d="M-10-7H10M-10-3H0" stroke="#a9bbf2" stroke-width="2"/><path d="M-21.500-1L0 7 21.500-1v14q0 4.500-4.500 4.500h-34q-4.500 0-4.500-4.500z" fill="#b2c8ff"/><path d="M-21 16L0 5l-2-1-19.500-5z" fill="#a2baf9"/>'],
  [1, '<defs><linearGradient id="jg" x1="0" y1="0" x2="1" y2="1"><stop stop-color="#2293f5"/><stop offset="1" stop-color="#0442a5"/></linearGradient></defs><rect x="-24" y="-23" width="47" height="46" rx="3" fill="url(#jg)"/><path d="M-2-13H14M8-12V5q0 9-8 9-7 0-9-3" fill="none" stroke="#fff" stroke-width="5.500"/><circle cx="-11" cy="7.500" r="4.500" fill="#fff"/>'],
  [1, '<circle r="20.500" fill="#3b8c3d" stroke="#fbfbfb" stroke-width="3"/><path d="M-19 4A19 19 0 0 0 19 4z" fill="#6cab45" opacity=".6"/><path d="M-8-18l-1 8 5 6v16l4 4 4-3-2-3 3-3-2-3 2-2-2-3V-4l5-6-1-8-5-1v5h-5v-5z" fill="#fbfbfb"/><path d="M-2-3v13" stroke="#3b8c3d" stroke-width="1.500"/>'],
  [4, '<path d="M-22-17q0-3 3-3h13l4 3h21q3 0 3 3v8h-44z" fill="#cfcabb"/><path d="M-22-8q0-3 3-3h15q3 0 4-3h19q3 0 3 3v28q0 3-3 3h-38q-3 0-3-3z" fill="#f1efe9"/><path d="M22 9v8q0 3-3 3H8z" fill="#fff"/>'],
  [1, '<rect x="-21.500" y="-17.500" width="43" height="35" rx="3" fill="#4b4b4b" stroke="#777"/><path d="M-15-12l6 3-6 3M-8-3h7" fill="none" stroke="#fff" stroke-width="1.700"/>'],
  [0, '<defs><linearGradient id="fx" x1="1" y1="0" x2="0" y2="1"><stop stop-color="#ffe226"/><stop offset=".45" stop-color="#ff8a16"/><stop offset=".8" stop-color="#f5304c"/><stop offset="1" stop-color="#c00d8c"/></linearGradient></defs><circle cx="-1" cy="-2" r="17" fill="#1a78e6"/><circle cx="1" cy="3" r="10" fill="#1b2f8f"/><path d="M-16-18q1 4 3 5 4-3 8-2-4 4-1 7l4 0-4 5q0 8 7 9 8 0 10-6 2-4 0-8-7-7-5-16 2-3 3 0 12 8 12 25-2 20-21 21-18 0-22-18-1-10 6-22z" fill="url(#fx)"/><path d="M6-20Q4-10 11-3q2 6-2 12 9-4 9-14Q16-13 6-20z" fill="#ffe02e" opacity=".8"/>'],
  [1, page('#1383c2') + '<path d="M-12-6h8M-12-2h8M-12 2h8M-12 6h24M-12 10h24M-12 14H6" stroke="#0d75b4" stroke-width="1.800"/><rect x="-1.500" y="-6.500" width="13" height="9" fill="#fff" stroke="#0d75b4"/><path d="M-1 2l3-5 3 3 2-2 4 4z" fill="#0d75b4"/>'],
  [1, '<defs><linearGradient id="tx" x1="0" y1="0" x2="1" y2="1"><stop stop-color="#15142c"/><stop offset="1" stop-color="#4747e6"/></linearGradient></defs><rect x="-19" y="-20" width="40" height="40" rx="1" fill="url(#tx)" stroke="#560c84"/><path d="M-10-10L18 3v14h-29z" fill="#7b25ac" opacity=".6"/><path d="M-15-19l2 7 5-5 3 6-9 4z" fill="#55565a"/><path d="M-12-6l8-4 2 2-8 4z" fill="#e9ed1c"/><g font-family="Liberation Serif" font-size="16" fill="#f4e526"><text x="-10" y="13">T</text><text x="-2" y="18">E</text><text x="8" y="13">X</text></g>'],
  [1, '<rect x="-18" y="-22" width="36" height="44" rx="4" fill="#ececec" stroke="#fff"/><path d="M-14-14H14M-14-10H14M-14-6H14M-14-2H14M-14 2H14M-14 6H14M-14 10H14" stroke="#cfcfcf"/><path d="M-8 5L8-12l5 4.500L-3 10z" fill="#3063de"/><path d="M-6 7L10-10" stroke="#5b8af2" stroke-width="2"/><path d="M-8 5l5 5-11 5z" fill="#f6d6bb"/><path d="M-12 11l2 2-4 2z" fill="#333"/>'],
  [0, '<path d="M-21-2L0-14l21 12v12L0 21l-21-11z" fill="#dfab64"/><path d="M-21-2L0-15 9-9-1-2-6 5z" fill="#69b828"/><path d="M2-8L9-12 21-3l-8 5z" fill="#efd546"/><path d="M-6 6L9-3l5 6-1 6-13 6z" fill="#6e9ad2" stroke="#34578a"/><path d="M-17 3l8 6v6l-8-5zM14 6l7-4v7l-7 4z" fill="#55534f"/><path d="M-11-9v7" stroke="#c05b1d" stroke-width="4"/><path d="M-19-17l8-5 8 5v7l-8 5-8-5z" fill="#458a12"/><path d="M14-11v9" stroke="#458a12" stroke-width="4"/>'],
  [1, page('#32ab1a') + '<g fill="none" stroke="#32ab1a" stroke-width="1.200"><path d="M-11.500-4.500h21v19h-21zM-11.500-1h21M-11.500 3h21M-11.500 7h21M-11.500 11h21M-4-4.500v19M3-4.500v19"/><rect x="1.500" y="5.500" width="10" height="9" fill="#fff"/><path d="M4 14v-3M6.500 14V8M9.500 14v-4"/></g>'],
  [1, '<path d="M-15-18q4 9 10 8 12-1 19-10 2 16-5 25-9 7-19 2-9-7-5-25z" fill="#5f5a4e"/><path d="M-12 2q10 6 20 0" stroke="#2e2a24" fill="none"/><circle cx="-18" cy="-4" r="5" fill="#0f1418" stroke="#7e8a90"/><circle cx="-19.500" cy="-6" r="1.700" fill="#fff"/><circle cx="-11" cy="-7" r="3.500" fill="#ddd"/><circle cx="-2" cy="-7" r="4.500" fill="#eee"/><circle cx="-11" cy="-6.500" r="1.500"/><circle cx="-1.500" cy="-6.500" r="2"/><path d="M3 0l9 5" stroke="#d98023" stroke-width="2.500"/><path d="M12 4l5 4" stroke="#c7ccd0" stroke-width="4"/><path d="M16 6q6 1 7 10-7-1-9-7z" fill="#050505"/>'],
];
document.getElementById('dock').innerHTML = dock.map(([n, s], i) => {
  const bg = i === 0 ? 'bg-[#474747]' : '';
  const dots = '<i class="size-[6px] rounded-full bg-[#e95420]"></i>'.repeat(n);
  return `<div class="relative flex h-[66px] items-center justify-center"><div class="size-[62px] rounded-[4px] ${bg}"><svg class="size-[62px]" viewBox="-31 -31 62 62">${s}</svg></div><div class="absolute left-1 top-0 flex h-full flex-col items-center justify-center gap-[2.5px]">${dots}</div></div>`;
}).join('');
</script>
</body>
</html>
